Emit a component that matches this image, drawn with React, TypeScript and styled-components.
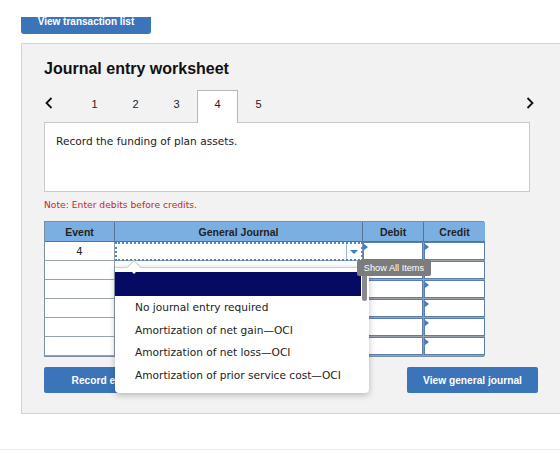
import React from "react";
import styled, { createGlobalStyle } from "styled-components";

const GlobalStyle = createGlobalStyle`
  body {
    margin: 0;
    background: #ffffff;
    font-family: "DejaVu Sans", Verdana, sans-serif;
    color: #222222;
  }
`;

const Page = styled.div`
  position: relative;
  width: 560px;
  height: 450px;
  overflow: hidden;
  border-bottom: 1px solid #ececec;
  box-sizing: border-box;
`;

const TopBar = styled.div`
  padding: 17px 0 0 21px;
  height: 17px;
`;

const TopButton = styled.button`
  width: 130px;
  height: 17px;
  border: none;
  border-radius: 0 0 3px 3px;
  background: #3c74b9;
  color: #ffffff;
  font-family: "Liberation Sans", Arial, sans-serif;
  font-weight: 700;
  font-size: 10px;
  line-height: 10px;
  padding: 0;
  display: flex;
  align-items: flex-start;
  justify-content: center;
`;

const Panel = styled.div`
  margin: 9px 0 0 21px;
  height: 353px;
  background: #f2f2f2;
  border: 1px solid #d3d3d3;
  border-right: none;
  padding: 16px 0 0 22px;
`;

const Title = styled.h2`
  margin: 0;
  font-family: "Liberation Sans", Arial, sans-serif;
  font-weight: 700;
  font-size: 16px;
  line-height: 18px;
  color: #111111;
`;

const TabRow = styled.div`
  display: flex;
  align-items: stretch;
  height: 32px;
  margin-top: 12px;
  width: 494px;
  position: relative;
  z-index: 1;
`;

const Arrow = styled.div<{ $right?: boolean }>`
  width: 30px;
  display: flex;
  align-items: center;
  justify-content: ${(p) => (p.$right ? "flex-end" : "flex-start")};
  padding: ${(p) => (p.$right ? "0 4px 6px 0" : "0 0 6px 1px")};
  box-sizing: border-box;
`;

const Tab = styled.div<{ $active?: boolean }>`
  width: 41px;
  display: flex;
  justify-content: center;
  align-items: center;
  padding-bottom: 6px;
  box-sizing: border-box;
  font-family: "Liberation Sans", Arial, sans-serif;
  font-size: 11px;
  color: #222222;
  background: ${(p) => (p.$active ? "#ffffff" : "transparent")};
  border: 1px solid ${(p) => (p.$active ? "#b8b8b8" : "transparent")};
  border-bottom: none;
  margin-bottom: -1px;
`;

const Spacer = styled.div`
  flex: 1;
`;

const Instruction = styled.div`
  width: 486px;
  height: 70px;
  box-sizing: border-box;
  background: #ffffff;
  border: 1px solid #c9c9c9;
  padding: 12px 11px;
  font-size: 10.6px;
  color: #222222;
`;

const Note = styled.div`
  margin-top: 7px;
  font-size: 9.2px;
  color: #c8262d;
  height: 12px;
`;

const TableWrap = styled.div`
  position: relative;
  margin-top: 10px;
  width: 440px;
`;

const Grid = styled.div`
  display: grid;
  grid-template-columns: 70px 248px 61px 61px;
  grid-template-rows: 20px repeat(6, 19px);
  border: 1px solid #7a8ea6;
  box-sizing: border-box;
  background: #ffffff;
`;

const HeadCell = styled.div`
  background: #7bafe2;
  border-right: 1px solid #5b7290;
  border-bottom: 1px solid #5b7290;
  display: flex;
  align-items: center;
  justify-content: center;
  font-family: "Liberation Sans", Arial, sans-serif;
  font-weight: 700;
  font-size: 10.5px;
  color: #222222;
  &:nth-child(4) {
    border-right: none;
  }
`;

const Cell = styled.div<{ $kind: "event" | "journal" | "amount"; $last?: boolean }>`
  position: relative;
  background: #ffffff;
  box-sizing: border-box;
  display: flex;
  align-items: center;
  justify-content: center;
  font-size: 10px;
  border-right: ${(p) => (p.$last ? "none" : "1px solid #8e9aa8")};
  border-bottom: 1px solid #9aa3ad;
  box-shadow: ${(p) =>
    p.$kind === "amount" ? "inset 0 0 0 1px #5a7fae" : "none"};
`;

const Marker = styled.span`
  position: absolute;
  left: 1px;
  top: 2px;
  width: 0;
  height: 0;
  border-top: 3px solid transparent;
  border-bottom: 3px solid transparent;
  border-left: 4px solid #3a7bd0;
`;

const SelectBox = styled.div`
  position: absolute;
  inset: 0 -1px -1px 0;
  border: 2px dotted #4d86cc;
  display: flex;
  justify-content: flex-end;
`;

const SelectToggle = styled.div`
  width: 14px;
  border-left: 1px solid #9ab6d8;
  display: flex;
  align-items: center;
  justify-content: center;
  &::after {
    content: "";
    border-left: 4px solid transparent;
    border-right: 4px solid transparent;
    border-top: 4px solid #3d7ccc;
  }
`;

const Popover = styled.div`
  position: absolute;
  left: 71px;
  top: 46px;
  width: 254px;
  height: 126px;
  background: #ffffff;
  border-top: 1px solid #cfcfcf;
  border-radius: 0 0 4px 4px;
  box-shadow: 0 2px 6px rgba(0, 0, 0, 0.25);
  padding-top: 4px;
  box-sizing: border-box;
  z-index: 3;
  &::before {
    content: "";
    position: absolute;
    left: 14px;
    top: -6px;
    width: 9px;
    height: 9px;
    background: #ffffff;
    border-left: 1px solid #cfcfcf;
    border-top: 1px solid #cfcfcf;
    transform: rotate(45deg);
  }
`;

const Selected = styled.div`
  width: 246px;
  height: 24px;
  background: #060a62;
`;

const Option = styled.div`
  height: 22.5px;
  display: flex;
  align-items: center;
  padding-left: 20px;
  font-size: 10.6px;
  color: #222222;
  white-space: nowrap;
`;

const Scrollbar = styled.div`
  position: absolute;
  right: 2px;
  top: 6px;
  width: 5px;
  height: 27px;
  border-radius: 3px;
  background: #8a8a8a;
`;

const Tooltip = styled.div`
  position: absolute;
  left: 313px;
  top: 39px;
  width: 74px;
  height: 16px;
  background: #7c7c7c;
  color: #ffffff;
  font-family: "Liberation Sans", Arial, sans-serif;
  font-size: 9.2px;
  display: flex;
  align-items: center;
  justify-content: center;
  border-radius: 2px;
  z-index: 4;
`;

const ButtonRow = styled.div`
  display: flex;
  justify-content: space-between;
  width: 494px;
  margin-top: 10px;
`;

const ActionButton = styled.button<{ $narrow?: boolean }>`
  width: ${(p) => (p.$narrow ? "118px" : "131px")};
  height: 26px;
  border: none;
  border-radius: 2px;
  background: #3c74b9;
  color: #ffffff;
  font-family: "Liberation Sans", Arial, sans-serif;
  font-weight: 700;
  font-size: 10.2px;
  padding: 0;
`;

const options = [
  "No journal entry required",
  "Amortization of net gain\u2014OCI",
  "Amortization of net loss\u2014OCI",
  "Amortization of prior service cost\u2014OCI",
];

const Chevron = ({ dir }: { dir: "left" | "right" }) => (
  <svg width="8" height="12" viewBox="0 0 8 12">
    <path
      d={dir === "left" ? "M6.5 1 L1.5 6 L6.5 11" : "M1.5 1 L6.5 6 L1.5 11"}
      fill="none"
      stroke="#111"
      strokeWidth="1.8"
    />
  </svg>
);

export default function App() {
  const rows = [0, 1, 2, 3, 4, 5];
  return (
    <Page>
      <GlobalStyle />
      <TopBar>
        <TopButton>View transaction list</TopButton>
      </TopBar>
      <Panel>
        <Title>Journal entry worksheet</Title>
        <TabRow>
          <Arrow>
            <Chevron dir="left" />
          </Arrow>
          {[1, 2, 3, 4, 5].map((n) => (
            <Tab key={n} $active={n === 4}>
              {n}
            </Tab>
          ))}
          <Spacer />
          <Arrow $right>
            <Chevron dir="right" />
          </Arrow>
        </TabRow>
        <Instruction>Record the funding of plan assets.</Instruction>
        <Note>Note: Enter debits before credits.</Note>
        <TableWrap>
          <Grid>
            <HeadCell>Event</HeadCell>
            <HeadCell>General Journal</HeadCell>
            <HeadCell>Debit</HeadCell>
            <HeadCell>Credit</HeadCell>
            {rows.map((r) => (
              <React.Fragment key={r}>
                <Cell $kind="event">{r === 0 ? "4" : ""}</Cell>
                <Cell $kind="journal">
                  {r === 0 && (
                    <SelectBox>
                      <SelectToggle />
                    </SelectBox>
                  )}
                </Cell>
                <Cell $kind="amount">
                  <Marker />
                </Cell>
                <Cell $kind="amount" $last>
                  <Marker />
                </Cell>
              </React.Fragment>
            ))}
          </Grid>
          <Popover>
            <Selected />
            {options.map((o) => (
              <Option key={o}>{o}</Option>
            ))}
            <Scrollbar />
          </Popover>
          <Tooltip>Show All Items</Tooltip>
        </TableWrap>
        <ButtonRow>
          <ActionButton $narrow>Record entry</ActionButton>
          <ActionButton>View general journal</ActionButton>
        </ButtonRow>
      </Panel>
    </Page>
  );
}
